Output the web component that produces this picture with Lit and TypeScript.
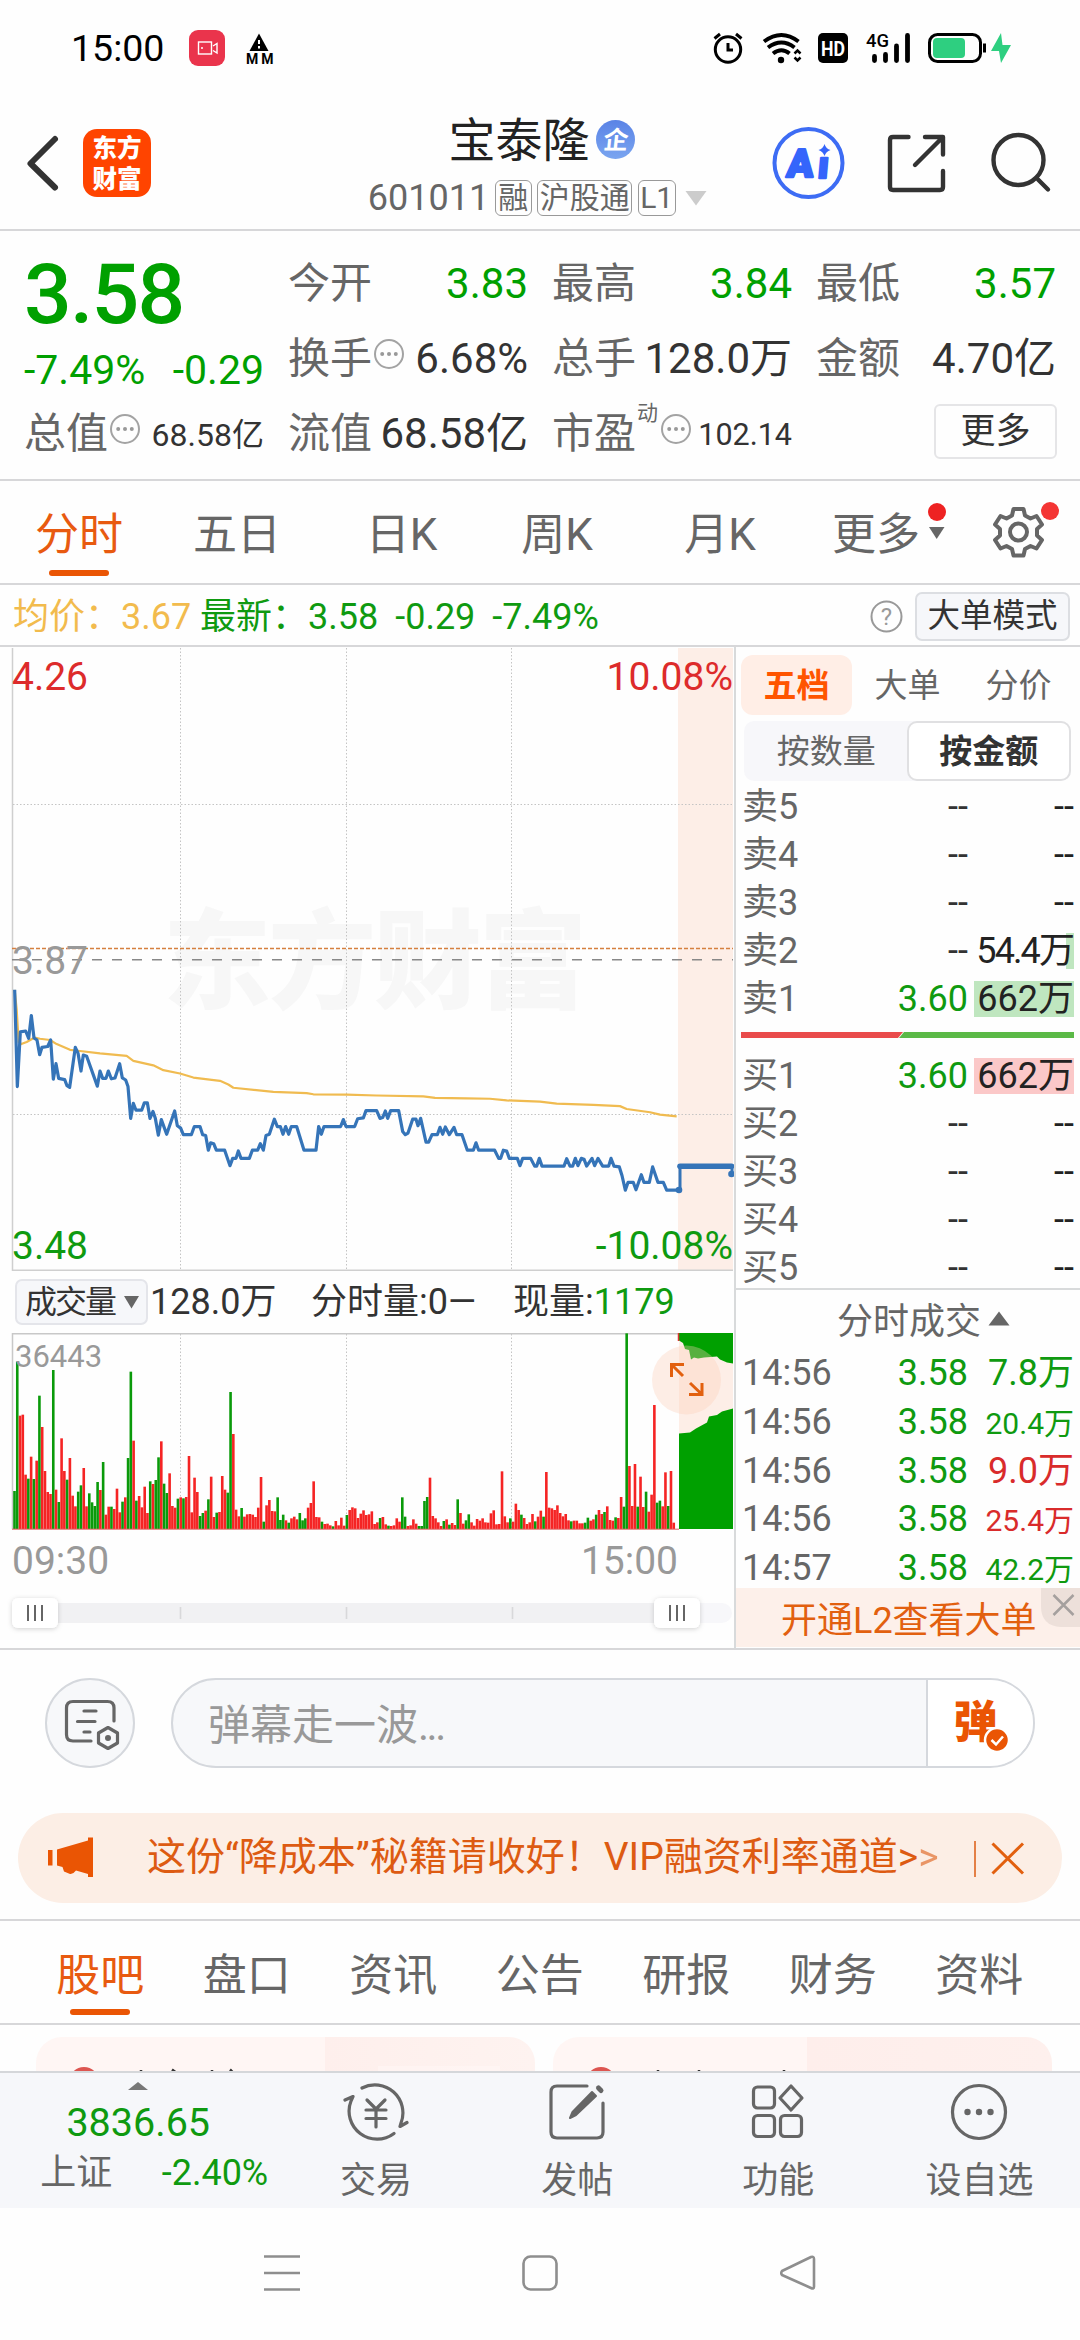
import { LitElement, html, svg, css } from "lit";
import { customElement } from "lit/decorators.js";
import { classMap } from "lit/directives/class-map.js";

const FONT = css`Roboto, "Noto Sans CJK SC", sans-serif`;

/* Price trace: x in 1/3 px from the left edge, y in units of the plot grid */
const PRICE = `44,857 52,1094 61,960 77,958 86,976 94,920 102,975 111,980 119,1016 126,998 143,996 152,980 160,1076 168,1038
176,1074 194,1077 201,1092 209,1096 226,998 234,1012 243,1056 250,1017 260,1020 292,1093 300,1056 308,1074 318,1074 325,1056
334,1075 345,1073 359,1038 367,1073 377,1078 384,1094 392,1172 400,1135 408,1152 425,1152 433,1134 442,1134 450,1172 459,1155
466,1172 475,1213 484,1175 500,1211 524,1154 532,1190 542,1196 550,1212 574,1212 583,1192 600,1192 608,1212 617,1214 625,1250
632,1232 641,1234 649,1250 674,1250 690,1288 698,1270 708,1270 715,1252 723,1270 748,1270 757,1250 773,1250 781,1234 790,1250
798,1214 808,1211 823,1174 832,1192 841,1192 849,1211 857,1192 866,1211 874,1192 890,1192 912,1250 948,1250 956,1192 964,1211
972,1192 1022,1192 1030,1175 1038,1192 1064,1192 1073,1173 1090,1171 1098,1153 1130,1153 1140,1172 1148,1170 1156,1154
1163,1172 1172,1153 1196,1153 1208,1204 1216,1212 1224,1208 1238,1174 1248,1174 1254,1190 1262,1172 1278,1230 1286,1230
1296,1212 1312,1212 1320,1194 1328,1211 1336,1193 1348,1212 1362,1194 1370,1212 1386,1212 1402,1250 1420,1250 1428,1232
1436,1250 1484,1250 1496,1270 1502,1270 1510,1250 1520,1252 1528,1270 1552,1270 1560,1288 1568,1270 1592,1270 1604,1289
1610,1289 1618,1270 1626,1289 1692,1289 1700,1271 1710,1289 1718,1289 1726,1270 1734,1288 1744,1270 1752,1272 1760,1289
1776,1270 1784,1288 1794,1270 1808,1289 1826,1289 1833,1270 1842,1289 1858,1291 1866,1312 1876,1348 1884,1329 1900,1329
1908,1347 1924,1310 1932,1329 1948,1329 1958,1291 1974,1329 1990,1329 2000,1348 2037,1348`;

const AVERAGE = `44,857 50,905 56,985 64,990 80,985 104,974 120,977 150,980 170,990 210,1004 240,1007 300,1013 380,1019 400,1031
460,1042 490,1054 540,1062 580,1072 660,1080 685,1089 700,1097 820,1107 920,1110 940,1113 1040,1114 1130,1116 1270,1118
1305,1122 1400,1123 1470,1124 1520,1128 1620,1131 1670,1136 1780,1139 1860,1142 1880,1149 1950,1157 1980,1163 2030,1167`;

/* Top of each one-minute bar (1/3 px); "g" marks a falling minute */
const BARS = `663g 275g 437 434 614 626g 560 627g 572 377g 471 603 666 672 300g 659 696g 505 603 629g 564 677 709 665g 646g 594
709 670g 697g 708g 636g 660 576g 734 710 710g 717 656 727 695g 682 564g 305g 512 692g 678 712 650 729 634g 642 630g 562g 514
641g 669g 610 708 713 686g 682 685g 681 558 727 623 666 738g 729g 722 688g 620 741 728g 726 618 659 668g 366g 492 719 739 714g
740 733 732 734 741 713 621 755g 706 690 723 724 682g 750g 734g 751 758g 745 740 748 729g 751g 745g 713 699 634 741 742 755g
762 761 766 769g 753 766 743 767 735g 720 712 715 744 731 721 735 733 724 762 757 744g 741 763 767g 768 766 745 755 682g 740g
768 766 748 761 768g 768g 693g 681g 623 738 745 757 768 753g 748 764g 759 765 688g 729 761 751g 733g 757 767 747 752 745 757
758 730 721 763 762 604 739 757 745g 755 701 720 734g 744 762 757 732 754g 740 722 740g 606 713 715 720 706 729 739 732 751
754g 752 752 760 760 758g 743g 752 748 734g 720 732 726g 709 750 752 742g 744 681 710g 190g 588 708 582 710g 620 711 665g 725
674 405 698g 692g 709 607 708g 603 758`.split(/\s+/);

interface Level { name: string; price?: string; amount?: string; fill?: number; tight?: boolean; side: "sell" | "buy"; }

const SELLS: Level[] = [
  { name: "卖5", side: "sell" },
  { name: "卖4", side: "sell" },
  { name: "卖3", side: "sell" },
  { name: "卖2", amount: "54.4万", fill: 8, tight: true, side: "sell" },
  { name: "卖1", price: "3.60", amount: "662万", fill: 100, side: "sell" },
];
const BUYS: Level[] = [
  { name: "买1", price: "3.60", amount: "662万", fill: 100, side: "buy" },
  { name: "买2", side: "buy" },
  { name: "买3", side: "buy" },
  { name: "买4", side: "buy" },
  { name: "买5", side: "buy" },
];
const TRADES = [
  ["14:56", "7.8万", "down"],
  ["14:56", "20.4万", "down small"],
  ["14:56", "9.0万", "up"],
  ["14:56", "25.4万", "up small"],
  ["14:57", "42.2万", "down small"],
];

const infoDots = html`<svg class="dots" width="32" height="32" viewBox="0 0 32 32">
  <circle cx="16" cy="16" r="14" fill="none" stroke="#a3a3a3" stroke-width="2" />
  <g fill="#999"><circle cx="9.2" cy="16" r="2" /><circle cx="16" cy="16" r="2" /><circle cx="22.8" cy="16" r="2" /></g>
</svg>`;

@customElement("status-bar")
class StatusBar extends LitElement {
  static styles = css`
    :host { display: flex; height: 96px; align-items: center; padding-left: 71px; box-sizing: border-box; font-family: ${FONT}; }
    .time { font-size: 37.5px; line-height: 44px; width: 118px; color: #000; }
    .left { width: 100px; }
    .right { margin-left: auto; }
    svg { display: block; }
  `;
  render() {
    return html`
      <div class="time">15:00</div>
      <svg class="left" width="100" height="96" viewBox="189 0 100 96">
        <rect x="189" y="30" width="36" height="36" rx="9" fill="#ea344c" />
        <g fill="none" stroke="#fff" stroke-width="1.4"><rect x="198.5" y="42" width="13" height="12" /><path d="M213 46 l4 -2.5 v9.5 l-4 -2.5" /></g>
        <circle cx="202" cy="48" r="1" fill="#fff" />
        <path d="M259 33.5 L268.5 51 H249.5 Z" fill="#000" />
        <path d="M259 40 v4 M259 46 v2.4" stroke="#fff" stroke-width="2" />
        <text x="246" y="64" font-family="Roboto, sans-serif" font-weight="700" font-size="14" textLength="27.5" lengthAdjust="spacing">MM</text>
      </svg>
      <svg class="right" width="370" height="96" viewBox="710 0 370 96">
        <g fill="none" stroke="#000" stroke-width="3">
          <circle cx="728" cy="49.5" r="12.7" />
          <path d="M728 43 v7 h5" /><path d="M714.5 38.5 l5.5 -4.5 M741.5 38.5 l-5.5 -4.5" />
        </g>
        <g fill="none" stroke="#000" stroke-width="4">
          <path d="M764 41.5 Q781.5 28.5 798.5 41.5" /><path d="M768 47.5 Q781.5 37.5 794.5 47.5" /><path d="M773 53.5 Q781.5 47 789.5 53.5" />
        </g>
        <circle cx="781" cy="60" r="3.2" />
        <path d="M794.5 53.5 l3 -3 3 3 M794.5 57.5 l3 3 3 -3" fill="none" stroke="#000" stroke-width="2.5" />
        <rect x="818" y="33" width="30" height="30" rx="5" />
        <text x="833" y="55.5" text-anchor="middle" fill="#fff" font-family="Roboto, sans-serif" font-weight="700" font-size="20" textLength="24" lengthAdjust="spacingAndGlyphs">HD</text>
        <text x="866" y="47" font-family="Roboto, sans-serif" font-weight="500" font-size="18.5" textLength="23" lengthAdjust="spacingAndGlyphs">4G</text>
        <g stroke="#000" stroke-width="4.8" stroke-linecap="round"><path d="M874.5 56.5 V60.5 M885.5 54.5 V60.5 M896.5 46 V60.5 M907.5 35.5 V60.5" /></g>
        <rect x="929.5" y="34.5" width="51" height="27" rx="8" fill="none" stroke="#000" stroke-width="3" />
        <rect x="933" y="38" width="32" height="20" rx="4" fill="#2ecf80" />
        <path d="M984.5 43.5 V52.5" stroke="#000" stroke-width="3" />
        <path d="M1001 33 L991 51 H999 L1001 63 L1011 45 H1002.5 Z" fill="#2ecf80" />
      </svg>`;
  }
}

@customElement("stock-header")
class StockHeader extends LitElement {
  static styles = css`
    :host { display: flex; height: 135px; box-sizing: border-box; border-bottom: 2px solid #d7d7d9; font-family: ${FONT}; color: #222; }
    svg { display: block; flex: none; }
    .logo { width: 68px; height: 68px; margin: 33px 0 0 3px; border-radius: 14px; background: #ff4400; color: #fff; flex: none; }
    .mid { width: 620px; box-sizing: border-box; padding-left: 153px; display: flex; flex-direction: column; align-items: center; }
    .name { display: flex; align-items: center; font-size: 47px; line-height: 60px; height: 60px; margin-top: 15px; padding-left: 8px; gap: 6px; }
    .name svg { margin-top: -3px; }
    .sub { display: flex; align-items: center; height: 40px; margin-top: 7px; gap: 5.5px; font-size: 36px; color: #666; line-height: 40px; }
    .tag { border: 1.5px solid #999; border-radius: 6px; height: 36px; line-height: 33px; box-sizing: border-box; padding: 0 1.5px; font-size: 30px; }
    .one { padding: 0 2.5px; }
    .tri { margin-left: 4px; }
  `;
  render() {
    return html`
      <svg width="80" height="134" viewBox="0 96 80 134"><path d="M55 139 L30.5 163.5 L55 187.5" fill="none" stroke="#333" stroke-width="6" stroke-linecap="round" stroke-linejoin="round" /></svg>
      <svg class="logo" width="68" height="68" viewBox="0 0 68 68">
        <g fill="#fff" font-family="Noto Sans CJK SC" font-weight="900" font-size="24.5" text-anchor="middle"><text x="34" y="28">东方</text><text x="34" y="58.5">财富</text></g>
      </svg>
      <div class="mid">
        <div class="name">宝泰隆
          <svg width="39" height="39" viewBox="0 0 39 39">
            <defs><linearGradient id="b" x1="0" y1="0" x2="0" y2="1"><stop offset="0" stop-color="#5a83e6" /><stop offset="1" stop-color="#7aa5f0" /></linearGradient></defs>
            <circle cx="19.5" cy="19.5" r="19.5" fill="url(#b)" />
            <text x="20" y="29" text-anchor="middle" fill="#fff" font-family="Noto Sans CJK SC" font-weight="700" font-size="25" transform="skewX(-6) translate(2 0)">企</text>
          </svg>
        </div>
        <div class="sub"><span>601011</span><span class="tag one">融</span><span class="tag">沪股通</span><span class="tag">L1</span>
          <svg class="tri" width="22" height="16" viewBox="0 0 22 16"><path d="M0.5 1 H21.5 L11 15.5 Z" fill="#ccc" /></svg></div>
      </div>
      <svg width="309" height="134" viewBox="771 96 309 134">
        <circle cx="808.5" cy="163" r="34" fill="none" stroke="#3d6cf4" stroke-width="4" />
        <g fill="#3565fb" stroke="#3565fb" stroke-width="2.4" stroke-linejoin="round" font-family="Roboto, sans-serif" font-weight="900" font-size="39">
          <text transform="translate(786 177) skewX(-5)">A</text>
          <text transform="translate(817 178) skewX(-5)" font-size="38">ı</text>
        </g>
        <path d="M824.5 144 Q826 149 830.5 150 Q826 151.5 824.5 156 Q823 151.5 818.5 150 Q823 149 824.5 144 Z" fill="#3565fb" />
        <g fill="none" stroke="#333" stroke-width="4.4" stroke-linecap="round" stroke-linejoin="round">
          <path d="M908.5 137 H893 Q890 137 890 140 V187 Q890 190 893 190 H940 Q943 190 943 187 V171" />
          <path d="M925 137 H943 V154.5 M942 138 L915 165" />
          <circle cx="1018.5" cy="160" r="25" /><path d="M1038 179.5 L1048 189.5" />
        </g>
      </svg>`;
  }
}

@customElement("quote-panel")
class QuotePanel extends LitElement {
  static styles = css`
    :host { display: grid; grid-template-columns: repeat(4, 240px); column-gap: 24px; height: 250px; box-sizing: border-box; padding: 15px 24px 0; border-bottom: 2px solid #d7d7d9; font-family: ${FONT}; }
    .col { display: flex; flex-direction: column; }
    .cell { display: flex; align-items: center; height: 75px; font-size: 42px; line-height: 50px; color: #333; white-space: nowrap; }
    .label { color: #666; }
    .val { margin-left: auto; }
    .small { font-size: 30.5px; padding-top: 2px; }
    .cap { font-size: 32px; }
    .green { color: #00a000; }
    .big { height: 98px; line-height: 97px; font-size: 84px; font-weight: 500; color: #00a000; padding-left: 0; letter-spacing: -1.8px; }
    .change { display: flex; justify-content: space-between; height: 52px; line-height: 52px; font-size: 41px; color: #00a000; }
    .dots { margin-top: -9px; margin-left: 1px; }
    .sup { font-size: 21px; color: #666; margin: -41px 0 0 1px; width: 22px; }
    .more { margin-left: auto; width: 123px; height: 55px; box-sizing: border-box; border: 2px solid #e5e5e7; border-radius: 6px; font-size: 35px; line-height: 51px; text-align: center; margin-top: -5px; margin-right: -1px; }
  `;
  cell(label: string, value: string, green = false) {
    return html`<div class="cell"><span class="label">${label}</span><span class=${classMap({ val: true, green })}>${value}</span></div>`;
  }
  render() {
    return html`
      <div class="col">
        <div class="big">3.58</div>
        <div class="change"><span>-7.49%</span><span>-0.29</span></div>
        <div class="cell"><span class="label">总值</span>${infoDots}<span class="val small cap">68.58亿</span></div>
      </div>
      <div class="col">
        ${this.cell("今开", "3.83", true)}
        <div class="cell"><span class="label">换手</span>${infoDots}<span class="val">6.68%</span></div>
        ${this.cell("流值", "68.58亿")}
      </div>
      <div class="col">
        ${this.cell("最高", "3.84", true)} ${this.cell("总手", "128.0万")}
        <div class="cell"><span class="label">市盈</span><span class="sup">动</span>${infoDots}<span class="val small">102.14</span></div>
      </div>
      <div class="col">
        ${this.cell("最低", "3.57", true)} ${this.cell("金额", "4.70亿")}
        <div class="cell"><span class="more">更多</span></div>
      </div>`;
  }
}

@customElement("period-tabs")
class PeriodTabs extends LitElement {
  static styles = css`
    :host { display: grid; grid-template-columns: 158px 158px 171px 140px 186px 267px; height: 104px; box-sizing: border-box; border-bottom: 2px solid #d7d7d9; font-family: ${FONT}; font-size: 44px; color: #666; }
    .tab { display: flex; flex-direction: column; align-items: center; line-height: 108px; height: 102px; }
    .on { color: #e85a10; }
    .bar { width: 60px; height: 6px; border-radius: 3px; background: #ea5504; margin-top: -19px; flex: none; }
    .last { display: flex; line-height: 108px; padding-left: 19px; }
    svg { display: block; }
  `;
  render() {
    return html`
      <div class="tab on">分时<span class="bar"></span></div>
      <div class="tab">五日</div><div class="tab">日K</div><div class="tab">周K</div><div class="tab">月K</div>
      <div class="last">更多
        <svg width="160" height="102" viewBox="920 481 160 102">
          <circle cx="937" cy="512" r="9" fill="#ee2222" /><path d="M929 527 H944.5 L936.7 539 Z" fill="#666" />
          <g fill="none" stroke="#666" stroke-width="4" stroke-linejoin="round">
            <circle cx="1018.5" cy="532" r="8.5" />
            <path d="M1013.5 509 H1023.5 L1025 515.5 L1030.5 518.5 L1036.5 516 L1042 524.5 L1037 529 V535.5 L1042 540 L1036.5 548.5 L1030.5 546 L1025 549 L1023.5 555.5 H1013.5 L1012 549 L1006.5 546 L1000.5 548.5 L995 540 L1000 535.5 V529 L995 524.5 L1000.5 516 L1006.5 518.5 L1012 515.5 Z" />
          </g>
          <circle cx="1050" cy="511" r="9" fill="#f43534" />
        </svg>
      </div>`;
  }
}

@customElement("price-summary")
class PriceSummary extends LitElement {
  static styles = css`
    :host { display: flex; align-items: center; height: 62px; box-sizing: border-box; border-bottom: 2px solid #d7d7d9; padding-left: 13px; font-family: ${FONT}; font-size: 36px; line-height: 62px; white-space: pre; }
    span { padding-top: 3px; }
    .avg { color: #f2bb4d; width: 187px; }
    .new { color: #0f9a10; }
    .gap { margin-left: 17px; }
    svg { margin-left: auto; margin-top: 2px; }
    .mode { width: 155px; height: 49px; padding: 0; box-sizing: border-box; border: 2px solid #dcdee2; border-radius: 7px; background: #f6f7fa; font-size: 32.5px; line-height: 45px; text-align: center; margin: 2px 10px 0 12px; color: #333; }
  `;
  render() {
    return html`
      <span class="avg">均价：3.67</span><span class="new">最新：3.58</span><span class="new gap">-0.29</span><span class="new gap">-7.49%</span>
      <svg width="33" height="33" viewBox="0 0 33 33"><circle cx="16.5" cy="16.5" r="15" fill="none" stroke="#999" stroke-width="2" /><text x="16.5" y="25" text-anchor="middle" font-size="24" font-family="Roboto" fill="#999">?</text></svg>
      <span class="mode">大单模式</span>`;
  }
}

@customElement("price-chart")
class PriceChart extends LitElement {
  static styles = css`
    :host { display: block; height: 623px; }
    svg { display: block; }
    .t { font-family: Roboto, sans-serif; font-size: 39px; }
    .mark { font: 900 108px "Noto Sans CJK SC", sans-serif; fill: #f7f7f7; }
  `;
  render() {
    return html`<svg width="735" height="624" viewBox="0 647 735 624">
      <rect x="678" y="648" width="55" height="623" fill="#fdeee7" />
      <text class="mark" x="163" y="1000" textLength="424">东方财富</text>
      <g stroke="#c4c4c4" stroke-width="1" stroke-dasharray="1.5 2" fill="none">
        <path d="M180.5 648 V1270 M346.5 648 V1270 M511.5 648 V1270 M13 804.5 H733 M13 1114.5 H733" />
      </g>
      <path d="M12.5 648 V1271" stroke="#cfcfcf" stroke-width="1.5" /><path d="M12 1270.3 H733" stroke="#cfcfcf" stroke-width="1.6" />
      <path d="M12 948.5 H733" stroke="#d5803f" stroke-width="1.3" stroke-dasharray="4 2" />
      <path d="M12 959.8 H733" stroke="#888" stroke-width="1.5" stroke-dasharray="10 10" />
      <text class="t" x="12" y="690" fill="#dd2b2b">4.26</text>
      <text class="t" x="12" y="974" fill="#999">3.87</text>
      <text class="t" x="12" y="1259" fill="#0f9a10">3.48</text>
      <text class="t" x="733" y="690" text-anchor="end" fill="#dd2b2b">10.08%</text>
      <text class="t" x="733" y="1259" text-anchor="end" fill="#0f9a10">-10.08%</text>
      <g transform="translate(0 640) scale(0.33333 0.40816)" fill="none" stroke-linejoin="round">
        <polyline points=${AVERAGE} stroke="#f0bb50" stroke-width="2.2" vector-effect="non-scaling-stroke" />
        <polyline points=${PRICE} stroke="#3574b8" stroke-width="3.2" vector-effect="non-scaling-stroke" />
      </g>
      <path d="M680 1190 V1166 H732 V1174" fill="none" stroke="#3574b8" stroke-width="3" />
      <path d="M680 1166.3 H731.5" stroke="#3574b8" stroke-width="5.6" stroke-linecap="round" />
      <circle cx="679" cy="1190" r="3.3" fill="#3574b8" /><circle cx="731.5" cy="1174" r="3.3" fill="#3574b8" />
    </svg>`;
  }
}

@customElement("volume-chart")
class VolumeChart extends LitElement {
  static styles = css`
    :host { display: block; font-family: ${FONT}; }
    svg { display: block; }
    .head { display: flex; height: 63px; align-items: center; padding-left: 15px; font-size: 36px; line-height: 46px; color: #333; white-space: nowrap; }
    .pick { display: flex; align-items: center; width: 133px; height: 46px; box-sizing: border-box; border: 2px solid #e4e5ea; border-radius: 7px; background: #f6f7fa; padding-left: 8px; font-size: 32px; letter-spacing: -2px; line-height: 42px; }
    .pick svg { margin-left: 9px; }
    .total { margin-left: 2px; width: 161px; }
    .minute { width: 202px; }
    .green { color: #0f9a10; }
    .t { font-size: 31px; }
    .times { display: flex; justify-content: space-between; height: 60px; line-height: 62px; font-size: 39px; color: #999; padding: 0 56px 0 12px; }
  `;
  render() {
    return html`
      <div class="head">
        <span class="pick">成交量<svg width="15" height="14" viewBox="0 0 15 14"><path d="M0 1 H15 L7.5 13.5 Z" fill="#666" /></svg></span>
        <span class="total">128.0万</span><span class="minute">分时量:0—</span><span>现量:<span class="green">1179</span></span>
      </div>
      <svg width="735" height="197" viewBox="0 1333 735 197">
        <rect x="679" y="1333" width="54" height="196" fill="#fdeee7" />
        <path d="M180.5 1334 V1529 M346.5 1334 V1529 M511.5 1334 V1529" stroke="#c4c4c4" stroke-dasharray="1.5 2" />
        <path d="M12.5 1529 V1333.7 H733" fill="none" stroke="#c8c8c8" stroke-width="1.5" />
        ${BARS.map((b, i) => {
          const h = (777 - parseInt(b)) / 3;
          return svg`<rect x=${13.2 + i * 2.77} y=${1529 - h} width="2.6" height=${h} fill=${b.endsWith("g") ? "#0a9a0a" : "#f52424"} />`;
        })}
        <path d="M12 1529.2 H679" stroke="#e06060" stroke-width="1" />
        <path d="M679 1333 H733 V1363.5 L727 1362.5 L720 1359.5 L717 1356.5 L704 1357.5 L698 1358.5 L694 1357.5 L691 1359.5 L689 1350 L685 1349 L683 1343 L679 1340.5 Z" fill="#00a000" />
        <path d="M679 1529 V1433.5 L690 1432.5 L696 1428.5 L707 1422.5 L709 1416.5 L717 1415 L722 1411.5 L733 1408.5 V1529 Z" fill="#00a000" />
        <path d="M678.5 1333 V1341" stroke="#d33" stroke-width="1.5" />
        <text class="t" x="15" y="1366.5" fill="#999">36443</text>
        <circle cx="686.5" cy="1380" r="34.5" fill="#fbcdb6" fill-opacity="0.35" />
        <path d="M671.5 1377 V1364.5 H684 M672 1365 L683 1376 M702 1383 V1394.5 H689 M701.5 1394 L690 1383" fill="none" stroke="#e2600f" stroke-width="3" />
      </svg>
      <div class="times"><span>09:30</span><span>15:00</span></div>
      <svg width="734" height="58" viewBox="0 1590 734 58">
        <defs><filter id="s" x="-30%" y="-30%" width="160%" height="160%"><feDropShadow dx="0" dy="1" stdDeviation="2.5" flood-opacity="0.18" /></filter></defs>
        <rect x="30" y="1603" width="702" height="20" rx="10" fill="#f7f7fa" /><rect x="30" y="1603" width="646" height="20" fill="#f1f1f3" />
        <path d="M180.5 1607 V1619 M346.5 1607 V1619 M512.5 1607 V1619" stroke="#d8d8da" stroke-width="1.6" />
        <g filter="url(#s)" fill="#fff"><rect x="12" y="1598" width="46" height="30" rx="6" /><rect x="654" y="1598" width="46" height="30" rx="6" /></g>
        <path d="M28 1605 V1621 M35 1605 V1621 M42 1605 V1621 M670 1605 V1621 M677 1605 V1621 M684 1605 V1621" stroke="#666" stroke-width="2" />
      </svg>`;
  }
}

@customElement("order-book")
class OrderBook extends LitElement {
  static styles = css`
    :host { display: block; box-sizing: border-box; width: 346px; height: 1001px; overflow: hidden; border-left: 2px solid #d8dadb; font-family: ${FONT}; color: #666; font-size: 36px; }
    .tabs { display: grid; grid-template-columns: 111px 111px 111px; padding: 8px 0 0 5px; height: 60px; font-size: 33px; line-height: 61px; text-align: center; }
    .tabs .on { background: #ffeee6; border-radius: 12px; color: #ff5500; font-weight: 700; height: 60px; }
    .seg { display: flex; margin: 6px 9px 0 8px; height: 60px; background: #f7f7fa; border-radius: 10px; font-size: 33px; line-height: 62px; text-align: center; }
    .seg span { flex: 1; padding-left: 2px; }
    .seg .on { border: 2px solid #e0e0e2; box-sizing: border-box; line-height: 58px; background: #fff; border-radius: 10px; color: #333; font-weight: 700; padding: 0; }
    .levels { display: grid; grid-auto-rows: 48px; margin-top: 2px; }
    .row { display: grid; grid-template-columns: 100px 126px 106px; padding-left: 6px; line-height: 48px; white-space: nowrap; }
    .num { text-align: right; color: #333; }
    .price { color: #0f9a10; }
    .amt { display: grid; align-items: center; justify-items: end; color: #222; }
    .amt > * { grid-area: 1 / 1; }
    .amt .txt { z-index: 1; line-height: 48px; }
    .amt .tight { letter-spacing: -1.9px; padding-right: 1px; }
    .fill { height: 36px; }
    .fill.sell { background: #bfe6bf; }
    .fill.buy { background: #fbc8c8; }
    .ratio { display: block; margin: 9px 0 14px 5px; }
    .title { display: flex; align-items: center; height: 57px; margin-top: -4px; border-top: 2px solid #d8dadb; padding: 3px 0 0 101px; gap: 7px; line-height: 54px; }
    .title svg { margin-top: -6px; }
    .trades { display: grid; grid-auto-rows: 48.75px; height: 238px; }
    .trade { line-height: 46px; align-items: baseline; }
    .down { color: #0f9a10; }
    .up { color: #d92b2b; }
    .small { font-size: 30px; }
    .promo { display: flex; justify-content: space-between; height: 59px; background: #fdf0ea; color: #e2600f; line-height: 66px; padding-left: 45px; }
    .close { display: block; }
  `;
  level(l: Level) {
    return html`<div class="row"><span>${l.name}</span>
      <span class=${classMap({ num: true, price: !!l.price })}>${l.price ?? "--"}</span>
      <span class="amt">${l.fill ? html`<span class="fill ${l.side}" style="width:${l.fill}px"></span>` : ""}<span class=${classMap({ txt: true, tight: !!l.tight })}>${l.amount ?? "--"}</span></span></div>`;
  }
  render() {
    return html`
      <div class="tabs"><span class="on">五档</span><span>大单</span><span>分价</span></div>
      <div class="seg"><span>按数量</span><span class="on">按金额</span></div>
      <div class="levels">${SELLS.map((l) => this.level(l))}</div>
      <svg class="ratio" width="333" height="6" viewBox="0 0 333 6"><path d="M0 0 H162 L157 6 H0 Z" fill="#e94b4b" /><path d="M163 0 H333 V6 H158 Z" fill="#5bb947" /></svg>
      <div class="levels">${BUYS.map((l) => this.level(l))}</div>
      <div class="title">分时成交<svg width="22" height="15" viewBox="0 0 22 15"><path d="M11 0.5 L21.5 14.5 H0.5 Z" fill="#666" /></svg></div>
      <div class="trades">${TRADES.map(([t, a, c]) => html`<div class="row trade"><span>${t}</span><span class="num price">3.58</span><span class="num ${c}">${a}</span></div>`)}</div>
      <div class="promo">开通L2查看大单<svg class="close" width="39" height="39" viewBox="0 0 39 39"><path d="M0 0 H39 V39 H20 Q0 38 0 18 Z" fill="#ede0da" /><path d="M12.5 7 L32.5 27 M32.5 7 L12.5 27" stroke="#a5a09e" stroke-width="2.5" /></svg></div>`;
  }
}

@customElement("comment-bar")
class CommentBar extends LitElement {
  static styles = css`
    :host { display: flex; height: 165px; box-sizing: border-box; border-top: 2px solid #d7d7d9; padding: 28px 45px 0; font-family: ${FONT}; }
    .round { display: block; }
    .field { display: flex; width: 864px; height: 90px; margin-left: 36px; box-sizing: border-box; border: 2px solid #d5d8dd; border-radius: 45px; overflow: hidden; background: #f7f8fa; }
    .hint { flex: 1; padding-left: 35px; font-size: 42px; line-height: 92px; color: #999; }
    .ell { letter-spacing: -2.5px; }
    .send { width: 105px; background: #fff; border-left: 2px solid #d5d8dd; }
  `;
  render() {
    return html`
      <svg class="round" width="90" height="90" viewBox="45 1678 90 90">
        <circle cx="90" cy="1723" r="44" fill="#f7f8fa" stroke="#d5d8dd" stroke-width="2" />
        <g fill="none" stroke="#666" stroke-width="3.2" stroke-linecap="round" stroke-linejoin="round">
          <path d="M114 1721 V1708 Q114 1701.5 107.5 1701.5 H73 Q66.5 1701.5 66.5 1708 V1734.5 Q66.5 1741 73 1741 H91" />
          <path d="M84 1711 H96 M77.5 1721.5 H95 M84 1732 H90" />
          <path d="M108 1727.5 L117.5 1733 V1743 L108 1748.5 L98.5 1743 V1733 Z" />
        </g><circle cx="108" cy="1738" r="3" fill="#666" />
      </svg>
      <div class="field"><div class="hint">弹幕走一波<span class="ell">...</span></div>
        <div class="send"><svg width="105" height="86" viewBox="929 1680 105 86">
          <text x="976.5" y="1738" text-anchor="middle" font-family="Noto Sans CJK SC" font-weight="900" font-size="44" fill="#ea5504">弹</text>
          <circle cx="998" cy="1740" r="12" fill="#ea5504" stroke="#fff" stroke-width="2.5" /><path d="M992.5 1740 L997 1744.5 L1004 1736.5" fill="none" stroke="#fff" stroke-width="2.5" />
        </svg></div></div>`;
  }
}

@customElement("promo-banner")
class PromoBanner extends LitElement {
  static styles = css`
    :host { display: flex; align-items: center; width: 1044px; height: 90px; margin: 0 0 16px 18px; border-radius: 45px; background: #fceee5; color: #dd5b12; font-size: 39px; line-height: 89px; white-space: nowrap; }
    .horn { margin: 0 52px 0 29px; }
    .text { font-family: ${FONT}; width: 826px; height: 90px; }
    .fade { opacity: 0.6; }
  `;
  render() {
    return html`
      <svg class="horn" width="48" height="42" viewBox="47 1837 48 42"><path d="M48 1850 H52.5 V1865.5 H48 Z M57 1849.5 L88 1840.5 V1837.5 H93 V1877 H88 V1874 L76 1870.5 Q73 1874.5 70 1874 L64 1871.5 L62.5 1867 L57 1865.5 Z" fill="#ea5504" /></svg>
      <span class="text">这份“降成本”秘籍请收好！VIP融资利率通道&gt;<span class="fade">&gt;</span></span>
      <svg width="52" height="40" viewBox="973 1837 52 40"><path d="M975 1840 V1876" stroke="#dd5b12" stroke-width="1.5" /><path d="M992.5 1842.5 L1023 1872.5 M1023 1842.5 L992.5 1872.5" stroke="#e2600f" stroke-width="3" /></svg>`;
  }
}

@customElement("section-tabs")
class SectionTabs extends LitElement {
  static styles = css`
    :host { display: grid; grid-template-columns: repeat(7, 146.5px); height: 106px; box-sizing: border-box; padding-left: 27px; border-top: 2px solid #d7d7d9; border-bottom: 2px solid #d7d7d9; font-family: ${FONT}; font-size: 44px; color: #666; }
    .tab { display: flex; flex-direction: column; align-items: center; line-height: 110px; height: 102px; }
    .on { color: #e85a10; }
    .bar { width: 60px; height: 6px; border-radius: 3px; background: #ea5504; margin-top: -22px; flex: none; }
  `;
  render() {
    return ["股吧", "盘口", "资讯", "公告", "研报", "财务", "资料"].map((t, i) =>
      html`<div class=${classMap({ tab: true, on: i === 0 })}>${t}${i === 0 ? html`<span class="bar"></span>` : ""}</div>`);
  }
}

@customElement("teaser-cards")
class TeaserCards extends LitElement {
  static styles = css`
    :host { display: flex; gap: 18px; height: 46px; padding: 12px 0 0 36px; box-sizing: border-box; overflow: hidden; }
    .card { width: 499px; height: 100px; border-radius: 26px; background: linear-gradient(90deg, #fff6f4 58%, #feefec 58%, #fef3f0); padding: 29px 0 0 34px; box-sizing: border-box; }
    .second { background: linear-gradient(90deg, #fff6f4 51%, #feeeeb 51%, #fef0ed); }
    svg { display: block; }
  `;
  render() {
    return html`
      <div class="card"><svg width="460" height="6" viewBox="0 0 460 6"><path d="M308 0 H430 V6 H308 Z" fill="#fff7f5" opacity="0.6" /><circle cx="14" cy="16" r="15" fill="#dd5550" /><path d="M71 4 v2 M102 3.5 l4 3 M142 4 v2 M160 3.5 l3 3" stroke="#333" stroke-width="2.5" /></svg></div>
      <div class="card second"><svg width="220" height="6" viewBox="0 0 220 6"><circle cx="14" cy="16" r="15" fill="#dd5550" /><path d="M71 4 v2 M112 4 v2 M197 4 v2" stroke="#333" stroke-width="2.5" /></svg></div>`;
  }
}

@customElement("bottom-bar")
class BottomBar extends LitElement {
  static styles = css`
    :host { display: flex; height: 137px; box-sizing: border-box; border-top: 2px solid #d5d7da; background: #f6f7fa; font-family: ${FONT}; color: #666; font-size: 36px; }
    .index { width: 276px; display: flex; flex-direction: column; align-items: center; }
    .index svg { margin-top: 9px; height: 8px; }
    .pts { color: #0f9a10; font-size: 39.5px; line-height: 48px; margin-top: 9px; padding-left: 1px; }
    .line { display: flex; justify-content: space-between; width: 228px; line-height: 44px; margin-top: 4px; margin-left: 33px; }
    .chg { color: #0f9a10; }
    .item { width: 201.5px; display: flex; flex-direction: column; align-items: center; line-height: 48px; }
    .item svg { display: block; margin: 6px 0 12px; }
  `;
  item(icon: unknown, label: string) {
    return html`<div class="item"><svg width="66" height="66" viewBox="-33 -33 66 66" fill="none" stroke="#666" stroke-width="3.2" stroke-linecap="round" stroke-linejoin="round">${icon}</svg>${label}</div>`;
  }
  render() {
    return html`
      <div class="index"><svg width="20" height="8" viewBox="0 0 20 8"><path d="M10 0 L20 8 H0 Z" fill="#777" /></svg>
        <div class="pts">3836.65</div><div class="line"><span>上证</span><span class="chg">-2.40%</span></div></div>
      ${this.item(svg`<path d="M-14 -24 A28 28 0 0 1 25 11 L24 14.5 L31 10.5 M18 21.5 A28 28 0 0 1 -25 -11 L-23 -15.5 L-31 -12"/><path d="M-9 -12 L0 -3 L9 -12 M0 -3 V15 M-10 -2 H10 M-10 6.5 H10" />`, "交易")}
      ${this.item(svg`<path d="M10 -26 H-20 Q-26 -26 -26 -20 V20 Q-26 26 -20 26 H20 Q26 26 26 20 V-9" /><path d="M-7 6 L-4.5 0 L15 -20 L19 -16 L-1 3 Z" fill="#666" stroke-width="2" /><path d="M21.5 -24 L24 -21.5" stroke-width="5"/>`, "发帖")}
      ${this.item(svg`<rect x="-24.5" y="-25" width="21" height="21" rx="4"/><rect x="-24.5" y="3.5" width="21" height="21" rx="4"/><rect x="2.5" y="3.5" width="21" height="21" rx="4"/><path d="M13 -26 L24 -14 L13 -2 L2 -14 Z"/>`, "功能")}
      ${this.item(svg`<circle r="26.5"/><g fill="#666" stroke="none"><circle cx="-11.5" r="3.2"/><circle r="3.2"/><circle cx="11.5" r="3.2"/></g>`, "设自选")}`;
  }
}

@customElement("app-root")
class AppRoot extends LitElement {
  static styles = css`
    :host { display: block; width: 1080px; height: 2340px; overflow: hidden; background: #fefefe; }
    .trade-area { display: flex; height: 1001px; }
    .charts { width: 734px; }
    .nav { display: block; }
  `;
  render() {
    return html`
      <status-bar></status-bar>
      <stock-header></stock-header>
      <quote-panel></quote-panel>
      <period-tabs></period-tabs>
      <price-summary></price-summary>
      <div class="trade-area">
        <div class="charts"><price-chart></price-chart><volume-chart></volume-chart></div>
        <order-book></order-book>
      </div>
      <comment-bar></comment-bar>
      <promo-banner></promo-banner>
      <section-tabs></section-tabs>
      <teaser-cards></teaser-cards>
      <bottom-bar></bottom-bar>
      <svg class="nav" width="1080" height="131" viewBox="0 2209 1080 131" fill="none" stroke="#8e8e8e" stroke-width="2.6" stroke-linejoin="round">
        <path d="M264 2257.5 H300 M264 2274 H300 M264 2290.5 H300" /><rect x="523.5" y="2257.5" width="33" height="33" rx="7" /><path d="M782 2272 L811 2258 Q814 2257 814 2260 V2287.5 Q814 2290.5 811 2289 L782 2276 Q780.5 2274 782 2272 Z" />
      </svg>`;
  }
}
